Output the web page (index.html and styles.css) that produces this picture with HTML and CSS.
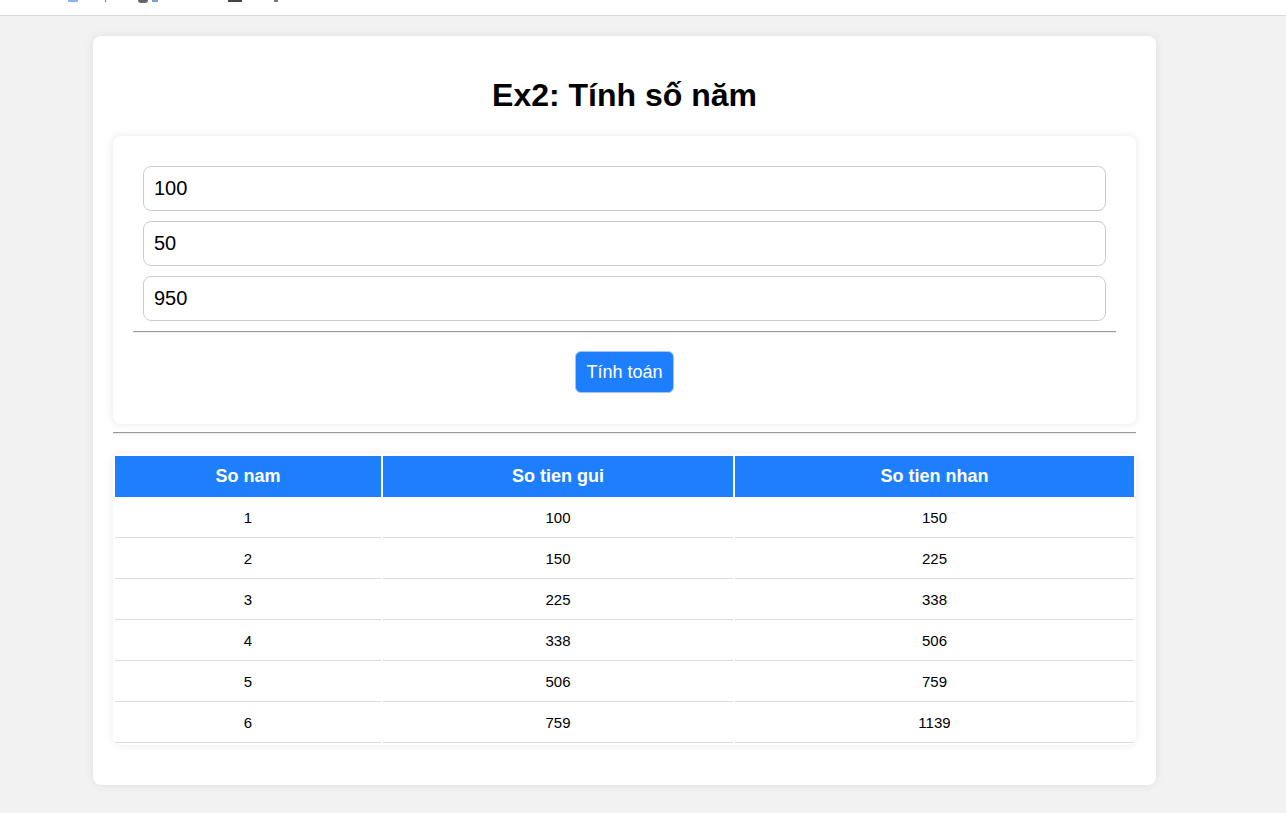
FILE: index.html
```html
<!DOCTYPE html>
<html lang="vi">
<head>
<meta charset="utf-8">
<title>Ex2: Tính số năm</title>
<link rel="stylesheet" href="styles.css">
</head>
<body>
<div class="bookmarks">
  <span class="bm bm-blue"></span>
  <span class="bm bm-dot"></span>
  <span class="bm bm-circle"></span>
  <span class="bm bm-line"></span>
  <span class="bm bm-bar"></span>
  <span class="bm bm-tick"></span>
</div>
<main class="page">
  <div class="container">
    <h1 class="title">Ex2: Tính số năm</h1>
    <form class="form-card">
      <input class="field" type="text" value="100">
      <input class="field" type="text" value="50">
      <input class="field" type="text" value="950">
      <hr class="divider">
      <button class="btn" type="button">Tính toán</button>
    </form>
    <hr class="sep">
    <table class="result">
      <thead>
        <tr><th class="c1">So nam</th><th class="c2">So tien gui</th><th class="c3">So tien nhan</th></tr>
      </thead>
      <tbody>
        <tr><td>1</td><td>100</td><td>150</td></tr>
        <tr><td>2</td><td>150</td><td>225</td></tr>
        <tr><td>3</td><td>225</td><td>338</td></tr>
        <tr><td>4</td><td>338</td><td>506</td></tr>
        <tr><td>5</td><td>506</td><td>759</td></tr>
        <tr><td>6</td><td>759</td><td>1139</td></tr>
      </tbody>
    </table>
  </div>
</main>
</body>
</html>
```

FILE: styles.css
```css
* { box-sizing: border-box; }
html, body { margin: 0; padding: 0; }
body {
  background: #f2f2f2;
  font-family: "Liberation Sans", Arial, sans-serif;
  color: #000;
}
.bookmarks {
  height: 16px;
  background: #fff;
  border-bottom: 1px solid #dadada;
  display: flex;
  align-items: flex-start;
}
.bm { display: block; height: 2px; }
.bm-blue { margin-left: 68px; width: 10px; background: #8ab4f8; height: 2px; }
.bm-dot { margin-left: 27px; width: 1px; background: #a06080; }
.bm-circle { margin-left: 32px; width: 10px; height: 3px; background: #666; border-radius: 0 0 5px 5px; }
.bm-line { margin-left: 4px; width: 6px; background: #7aa0d0; }
.bm-bar { margin-left: 70px; width: 14px; background: #444; }
.bm-tick { margin-left: 32px; width: 4px; background: #777; }

.page { padding: 20px 0 28px 93px; }
.container {
  width: 1063px;
  background: #fff;
  border-radius: 8px;
  box-shadow: 0 0 10px rgba(0,0,0,0.08);
  padding: 20px 20px 40px;
}
.title {
  margin: 21px 0 22px;
  text-align: center;
  font-size: 32px;
  line-height: 37px;
  font-weight: bold;
}
.form-card {
  background: #fff;
  border-radius: 8px;
  box-shadow: 0 0 10px rgba(0,0,0,0.1);
  padding: 30px 20px 31px;
  display: flex;
  flex-direction: column;
  align-items: center;
  gap: 10px;
}
.field {
  width: calc(100% - 20px);
  height: 45px;
  border: 1px solid #ccc;
  border-radius: 8px;
  padding: 10px;
  font-family: "Liberation Sans", Arial, sans-serif;
  font-size: 20px;
  color: #000;
  outline: none;
}
.divider {
  width: 100%;
  margin: 0 0 8px;
  border: 0;
  border-top: 1px solid #9a9a9a;
  border-bottom: 1px solid #eee;
}
.btn {
  background: #1e7ffe;
  color: #fff;
  border: 1px solid #9fc4f5;
  border-radius: 6px;
  padding: 10px 10px;
  font-family: "Liberation Sans", Arial, sans-serif;
  font-size: 18px;
  line-height: 20px;
}
.sep {
  margin: 8px 0 20px;
  border: 0;
  border-top: 1px solid #9a9a9a;
  border-bottom: 1px solid #eee;
}
.result {
  width: 100%;
  border-collapse: separate;
  border-spacing: 2px;
  border-radius: 8px;
  box-shadow: 0 0 10px rgba(0,0,0,0.08);
  background: #fff;
  table-layout: fixed;
}
.result th {
  background: #1e7ffe;
  color: #fff;
  font-size: 18px;
  line-height: 21px;
  font-weight: bold;
  padding: 10px;
  text-align: center;
}
.result th.c1 { width: 266px; }
.result th.c2 { width: 350px; }
.result td {
  font-size: 15px;
  line-height: 18px;
  padding: 10px;
  text-align: center;
  border-bottom: 1px solid #ddd;
}
```
